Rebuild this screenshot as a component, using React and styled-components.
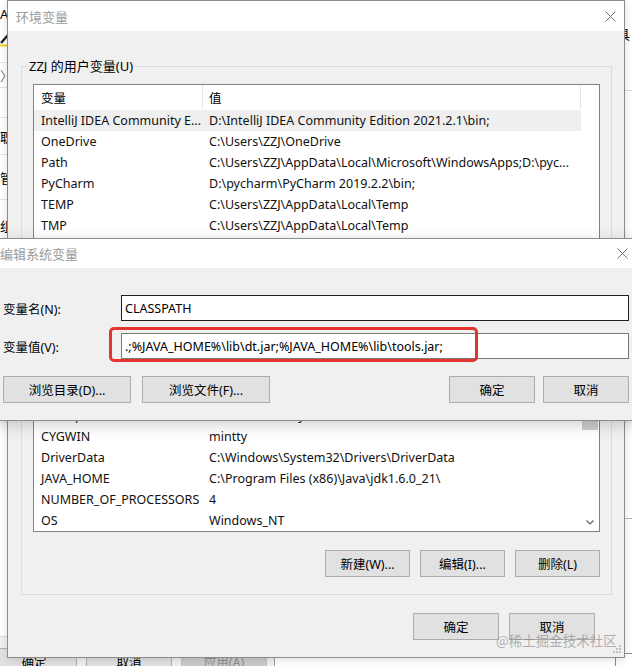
import React from "react";
import styled, { createGlobalStyle } from "styled-components";

// ---- Data ----

const userVars = [
	["IntelliJ IDEA Community E...", "D:\\IntelliJ IDEA Community Edition 2021.2.1\\bin;"],
	["OneDrive", "C:\\Users\\ZZJ\\OneDrive"],
	["Path", "C:\\Users\\ZZJ\\AppData\\Local\\Microsoft\\WindowsApps;D:\\pyc..."],
	["PyCharm", "D:\\pycharm\\PyCharm 2019.2.2\\bin;"],
	["TEMP", "C:\\Users\\ZZJ\\AppData\\Local\\Temp"],
	["TMP", "C:\\Users\\ZZJ\\AppData\\Local\\Temp"],
];

const systemVars = [
	["CLASSPATH", ".;%JAVA_HOME%\\lib\\dt.jar;%JAVA_HOME%\\lib\\tools.jar;"],
	["ComSpec", "C:\\WINDOWS\\system32\\cmd.exe"],
	["CYGWIN", "mintty"],
	["DriverData", "C:\\Windows\\System32\\Drivers\\DriverData"],
	["JAVA_HOME", "C:\\Program Files (x86)\\Java\\jdk1.6.0_21\\"],
	["NUMBER_OF_PROCESSORS", "4"],
	["OS", "Windows_NT"],
];

// ---- Small drawings ----

const CloseIcon = () => (
	<svg width="11" height="11" viewBox="0 0 11 11">
		<path d="M0.5 0.5 L10.5 10.5 M10.5 0.5 L0.5 10.5" stroke="#6e6e6e" strokeWidth="1" fill="none" />
	</svg>
);

const ChevronDown = () => (
	<svg width="8" height="5" viewBox="0 0 8 5">
		<path d="M0.5 0.5 L4 4 L7.5 0.5" stroke="#606060" strokeWidth="1.2" fill="none" />
	</svg>
);

const PenIcon = () => (
	<svg width="12" height="14" viewBox="0 0 12 14">
		<path d="M1 10 L8 2" stroke="#222" strokeWidth="2.4" fill="none" />
		<rect x="0" y="11.5" width="12" height="2" fill="#f2d21b" />
	</svg>
);

const Grip = () => (
	<svg width="9" height="9" viewBox="0 0 9 9">
		<g fill="#bdbdbd">
			<rect x="6" y="0" width="2" height="2" />
			<rect x="3" y="3" width="2" height="2" />
			<rect x="6" y="3" width="2" height="2" />
			<rect x="0" y="6" width="2" height="2" />
			<rect x="3" y="6" width="2" height="2" />
			<rect x="6" y="6" width="2" height="2" />
		</g>
	</svg>
);

// ---- Parts ----

const VarList = ({ rows, height, selected, scroll }) => (
	<List $h={height}>
		<ListMain>
			<HeaderRow>
				<HeaderCell $first>变量</HeaderCell>
				<HeaderCell>值</HeaderCell>
			</HeaderRow>
			{rows.map(([name, value], i) => (
				<Row key={name} $selected={i === selected}>
					<Cell $pad={7}>{name}</Cell>
					<Cell $pad={6}>{value}</Cell>
				</Row>
			))}
		</ListMain>
		<Gutter>
			{scroll && (
				<>
					<ArrowBox />
					<Track>
						<Thumb />
					</Track>
					<ArrowBox>
						<ChevronDown />
					</ArrowBox>
				</>
			)}
		</Gutter>
	</List>
);

const App = () => {
	return (
		<>
			<GlobalStyle />
			<Desktop>
				<BackWindow>
					<BackSide>
						<SideItem $h={28}>A</SideItem>
						<SideItem $h={24}>
							<PenIcon />
						</SideItem>
						<SideItem $h={11} $line />
						<SideItem $h={25} $line $muted>
							〉
						</SideItem>
						<SideItem $h={30} $line />
						<SideItem $h={37} $line>
							职
						</SideItem>
						<SideItem $h={45} $line>
							管
						</SideItem>
						<SideItem $h={50}>组</SideItem>
					</BackSide>
					<BackFooter>
						<Button $w={86}>确定</Button>
						<Button $w={86}>取消</Button>
						<Button $w={86} disabled>
							应用(A)
						</Button>
					</BackFooter>
				</BackWindow>

				<ToolWindow>
					<ToolStrip>具</ToolStrip>
				</ToolWindow>

				<CornerWindow />

				<EnvWindow>
					<TitleBar>
						<Title>环境变量</Title>
						<CloseButton $w={28}>
							<CloseIcon />
						</CloseButton>
					</TitleBar>
					<EnvBody>
						<Group>
							<Legend>ZZJ 的用户变量(U)</Legend>
							<VarList rows={userVars} height={196} selected={0} />
							<ButtonRow $mt={10}>
								<Button $w={85}>新建(N)...</Button>
								<Button $w={85}>编辑(E)...</Button>
								<Button $w={85}>删除(D)</Button>
							</ButtonRow>
						</Group>
						<Group $mt={1} $pb={17}>
							<Legend>系统变量(S)</Legend>
							<VarList rows={systemVars} height={174} selected={-1} scroll />
							<ButtonRow $mt={18}>
								<Button $w={85}>新建(W)...</Button>
								<Button $w={85}>编辑(I)...</Button>
								<Button $w={85}>删除(L)</Button>
							</ButtonRow>
						</Group>
						<ButtonRow $mt={18} $mr={17}>
							<Button $w={86}>确定</Button>
							<Button $w={86}>取消</Button>
						</ButtonRow>
					</EnvBody>
					<GripSpot>
						<Grip />
					</GripSpot>
				</EnvWindow>

				<EditDialog>
					<TitleBar $h={29}>
						<Title>编辑系统变量</Title>
						<CloseButton $w={36}>
							<CloseIcon />
						</CloseButton>
					</TitleBar>
					<EditBody>
						<FieldRow>
							<FieldLabel>变量名(N):</FieldLabel>
							<TextField $focused readOnly value="CLASSPATH" />
						</FieldRow>
						<FieldRow>
							<FieldLabel>变量值(V):</FieldLabel>
							<TextField readOnly value=".;%JAVA_HOME%\lib\dt.jar;%JAVA_HOME%\lib\tools.jar;" />
							<Highlight />
						</FieldRow>
						<DialogButtons>
							<ButtonGroup $gap={11}>
								<Button $w={128}>浏览目录(D)...</Button>
								<Button $w={128}>浏览文件(F)...</Button>
							</ButtonGroup>
							<ButtonGroup $gap={8}>
								<Button $w={86}>确定</Button>
								<Button $w={86}>取消</Button>
							</ButtonGroup>
						</DialogButtons>
					</EditBody>
				</EditDialog>

				<Watermark>@稀土掘金技术社区</Watermark>
			</Desktop>
		</>
	);
};

export default App;

// ---- Style ----

const GlobalStyle = createGlobalStyle`
	html, body {
		margin: 0;
		padding: 0;
		background: #fff;
	}
	* {
		box-sizing: border-box;
	}
`;

const Desktop = styled.div`
	position: relative;
	width: 632px;
	height: 666px;
	overflow: hidden;
	background: #fff;
	font-family: "Noto Sans", "Noto Sans CJK SC", sans-serif;
	font-size: 12.5px;
	color: #000;
`;

/* background windows */

const BackWindow = styled.div`
	position: absolute;
	left: -200px;
	top: -1px;
	width: 475px;
	height: 700px;
	display: flex;
	flex-direction: column;
	background: #fff;
	border: 1px solid #9a9a9a;
`;

const BackSide = styled.div`
	flex: 1;
	padding-left: 199px;
	display: flex;
	flex-direction: column;
	font-size: 13px;
`;

const SideItem = styled.div`
	height: ${({ $h }) => $h}px;
	flex: none;
	display: flex;
	align-items: center;
	white-space: nowrap;
	border-bottom: ${({ $line }) => ($line ? "1px solid #e3e3e3" : "none")};
	color: ${({ $muted }) => ($muted ? "#777" : "#000")};
`;

const BackFooter = styled.div`
	height: 62px;
	flex: none;
	display: flex;
	justify-content: flex-end;
	gap: 9px;
	padding: 11px 7px 0 0;
	background: #f0f0f0;
	border-top: 1px solid #dadada;
`;

const ToolWindow = styled.div`
	position: absolute;
	left: 560px;
	top: -1px;
	width: 200px;
	height: 520px;
	background: #fff;
	border: 1px solid #b5b5b5;
`;

const ToolStrip = styled.div`
	height: 91px;
	padding: 24px 0 0 56px;
	font-size: 13px;
	border-bottom: 1px solid #d9d9d9;
`;

const CornerWindow = styled.div`
	position: absolute;
	left: 615px;
	top: 653px;
	width: 100px;
	height: 50px;
	background: #fff;
	border-top: 1px solid #8a8a8a;
	border-left: 1px solid #8a8a8a;
`;

/* environment variables window */

const EnvWindow = styled.div`
	position: absolute;
	left: 7px;
	top: 0;
	width: 618px;
	display: flex;
	flex-direction: column;
	border: 1px solid #8c8c8c;
	background: #f0f0f0;
	box-shadow: 0 2px 8px rgba(0, 0, 0, 0.12);
`;

const TitleBar = styled.div`
	height: ${({ $h }) => $h || 30}px;
	flex: none;
	display: flex;
	align-items: center;
	justify-content: space-between;
	padding-left: 8px;
	background: #fff;
`;

const Title = styled.span`
	font-size: 13px;
	color: #9b9b9b;
	white-space: nowrap;
`;

const CloseButton = styled.div`
	width: ${({ $w }) => $w}px;
	height: 100%;
	display: flex;
	align-items: center;
	justify-content: center;
`;

const EnvBody = styled.div`
	display: flex;
	flex-direction: column;
	padding: 26px 12px 17px 13px;
	background: #f0f0f0;
`;

const Group = styled.fieldset`
	margin: ${({ $mt }) => $mt || 0}px 0 0 0;
	padding: 9px 11px ${({ $pb }) => $pb || 12}px 11px;
	border: 1px solid #dcdcdc;
	min-width: 0;
`;

const Legend = styled.legend`
	padding: 0 2px;
	margin-left: -6px;
	font-size: 13px;
	line-height: 18px;
	white-space: nowrap;
`;

const List = styled.div`
	height: ${({ $h }) => $h}px;
	display: flex;
	border: 1px solid #828282;
	background: #fff;
	overflow: hidden;
`;

const ListMain = styled.div`
	flex: 1;
	min-width: 0;
	display: flex;
	flex-direction: column;
`;

const HeaderRow = styled.div`
	height: 24px;
	flex: none;
	margin-bottom: 1px;
	display: grid;
	grid-template-columns: 169px 1fr;
	border-right: 1px solid #e5e5e5;
`;

const HeaderCell = styled.div`
	display: flex;
	align-items: center;
	padding-left: ${({ $first }) => ($first ? 7 : 6)}px;
	border-right: ${({ $first }) => ($first ? "1px solid #e5e5e5" : "none")};
`;

const Row = styled.div`
	height: 21px;
	flex: none;
	display: grid;
	grid-template-columns: 169px 1fr;
	align-items: center;
	background: ${({ $selected }) => ($selected ? "#efefef" : "transparent")};
`;

const Cell = styled.div`
	padding-left: ${({ $pad }) => $pad}px;
	white-space: nowrap;
	overflow: hidden;
	color: #111;
`;

const Gutter = styled.div`
	width: 18px;
	flex: none;
	display: flex;
	flex-direction: column;
`;

const ArrowBox = styled.div`
	height: 17px;
	flex: none;
	display: flex;
	align-items: center;
	justify-content: center;
`;

const Track = styled.div`
	flex: 1;
	padding: 4px 1px 0;
`;

const Thumb = styled.div`
	height: 50px;
	background: #cdcdcd;
`;

const ButtonRow = styled.div`
	display: flex;
	justify-content: flex-end;
	gap: 10px;
	margin-top: ${({ $mt }) => $mt || 0}px;
	margin-right: ${({ $mr }) => $mr || 0}px;
`;

const Button = styled.button`
	width: ${({ $w }) => $w}px;
	height: 27px;
	flex: none;
	padding: 0;
	font-family: inherit;
	font-size: 12.5px;
	color: #000;
	background: #e1e1e1;
	border: 1px solid #adadad;
	border-radius: 0;
	white-space: nowrap;

	&:disabled {
		color: #8d8d8d;
		background: #cccccc;
		border-color: #bfbfbf;
	}
`;

const GripSpot = styled.div`
	position: absolute;
	right: 2px;
	bottom: 3px;
	line-height: 0;
`;

/* edit system variable dialog */

const EditDialog = styled.div`
	position: absolute;
	left: -9px;
	top: 238px;
	width: 650px;
	display: flex;
	flex-direction: column;
	border: 1px solid #8c8c8c;
	background: #f0f0f0;
	box-shadow: 0 4px 14px rgba(0, 0, 0, 0.18);
`;

const EditBody = styled.div`
	display: flex;
	flex-direction: column;
	gap: 12px;
	padding: 27px 11px 17px 11px;
`;

const FieldRow = styled.div`
	position: relative;
	display: grid;
	grid-template-columns: 118px 1fr;
	align-items: center;
`;

const FieldLabel = styled.label`
	white-space: nowrap;
`;

const TextField = styled.input`
	height: 26px;
	width: 100%;
	padding: 0 3px;
	margin: 0;
	font-family: inherit;
	font-size: 12.5px;
	color: #000;
	background: #fff;
	border: 1px solid ${({ $focused }) => ($focused ? "#1e1e1e" : "#7a7a7a")};
	border-radius: 0;
	outline: none;
`;

const Highlight = styled.div`
	position: absolute;
	left: 106px;
	top: -6px;
	width: 369px;
	height: 35px;
	border: 3px solid #e3342f;
	border-radius: 5px;
	pointer-events: none;
`;

const DialogButtons = styled.div`
	display: flex;
	justify-content: space-between;
	margin-top: 5px;
`;

const ButtonGroup = styled.div`
	display: flex;
	gap: ${({ $gap }) => $gap}px;
`;

const Watermark = styled.div`
	position: absolute;
	left: 496px;
	top: 630px;
	font-family: "Noto Sans CJK SC", sans-serif;
	font-size: 13.5px;
	color: rgba(130, 130, 130, 0.6);
	white-space: nowrap;
	pointer-events: none;
`;
